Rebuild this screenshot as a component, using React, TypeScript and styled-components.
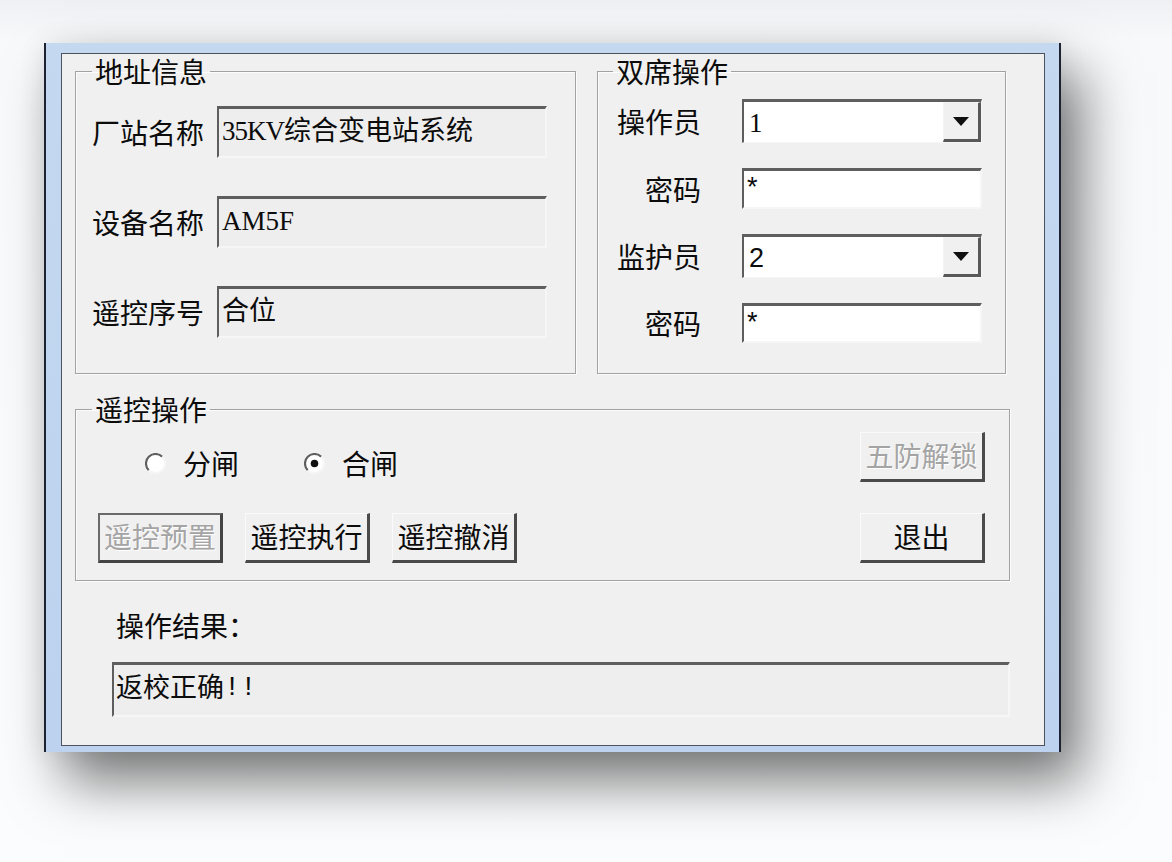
import React from "react";
import styled, { createGlobalStyle } from "styled-components";

const GlobalStyle = createGlobalStyle`
  html, body {
    margin: 0;
    padding: 0;
  }
  body {
    width: 1172px;
    height: 862px;
    overflow: hidden;
    background: linear-gradient(#eef0f3, #f8f9fb 40px, #fbfcfd);
    font-family: "Noto Sans CJK SC", "Noto Sans", sans-serif;
    color: #0c0c0c;
  }
`;

const Page = styled.div`
  padding: 43px 0 0 44px;
`;

const Window = styled.div`
  width: 1017px;
  height: 709px;
  box-sizing: border-box;
  padding: 10px 14px 6px 15px;
  border-left: 2px solid #1c2232;
  border-right: 2px solid #1c2232;
  background: linear-gradient(#c4d8f0, #bcd2ee);
  box-shadow: 20px 30px 52px rgba(0, 0, 0, 0.52), 0 0 26px rgba(0, 0, 0, 0.08);
`;

const Client = styled.div`
  height: 693px;
  box-sizing: border-box;
  padding: 3px 34px 0 13px;
  border: 1px solid #4c525e;
  background: #f0f0f0;
`;

const TopRow = styled.div`
  display: flex;
  gap: 21px;
  height: 317px;
`;

const Group = styled.fieldset<{ $width: number }>`
  width: ${(p) => p.$width}px;
  box-sizing: border-box;
  margin: 0;
  padding: 0;
  min-width: 0;
  border: 1px solid #a2a2a2;
  box-shadow: inset 1px 1px 0 #fcfcfc, 1px 1px 0 #fcfcfc;
`;

const Legend = styled.legend<{ $offset: number }>`
  margin-left: ${(p) => p.$offset}px;
  padding: 0 3px;
  font-size: 28px;
  line-height: 28px;
`;

const AddressGrid = styled.div`
  display: grid;
  grid-template-columns: 113px 330px;
  grid-auto-rows: 52px;
  column-gap: 12px;
  row-gap: 38px;
  align-items: center;
  padding: 21px 27px 0 16px;
`;

const DualGrid = styled.div`
  display: grid;
  grid-template-columns: 88px 240px;
  grid-template-rows: 44px 41px 44px 40px;
  column-gap: 41px;
  row-gap: 25px;
  align-items: center;
  padding: 14px 23px 0 15px;
`;

const Label = styled.div<{ $right?: boolean }>`
  font-size: 28px;
  line-height: 30px;
  white-space: nowrap;
  text-align: ${(p) => (p.$right ? "right" : "left")};
`;

const Field = styled.div<{ $white?: boolean; $serif?: boolean; $h?: number }>`
  height: ${(p) => p.$h ?? 52}px;
  box-sizing: border-box;
  display: flex;
  align-items: center;
  padding: 0 0 4px 3px;
  border-style: solid;
  border-width: 3px 2px 2px 2px;
  border-color: #5e5e5e #f6f6f6 #f6f6f6 #5e5e5e;
  background: ${(p) => (p.$white ? "#ffffff" : "#eeeeee")};
  font-family: ${(p) =>
    p.$serif
      ? `"Liberation Serif", "Noto Sans CJK SC", serif`
      : `"Liberation Sans", "Noto Sans CJK SC", sans-serif`};
  font-size: 27px;
  line-height: 30px;
  white-space: nowrap;
  overflow: hidden;
`;

const Condensed = styled.span`
  letter-spacing: -1px;
`;

const Mono = styled.span`
  font-family: "Liberation Mono", monospace;
`;

const Combo = styled.div`
  height: 44px;
  box-sizing: border-box;
  display: flex;
  border-style: solid;
  border-width: 3px 1px 1px 2px;
  border-color: #5e5e5e #f6f6f6 #f6f6f6 #5e5e5e;
  background: #ffffff;
`;

const ComboText = styled.div<{ $serif?: boolean }>`
  flex: 1;
  display: flex;
  align-items: center;
  padding: 2px 0 0 5px;
  font-family: ${(p) =>
    p.$serif ? `"Liberation Serif", serif` : `"Liberation Sans", sans-serif`};
  font-size: 27px;
`;

const DropButton = styled.div`
  width: 38px;
  box-sizing: border-box;
  display: flex;
  align-items: center;
  justify-content: center;
  border-style: solid;
  border-width: 1px 3px 3px 1px;
  border-color: #f4f4f4 #585858 #585858 #f4f4f4;
  background: #f0f0f0;
`;

const ControlGroup = styled(Group)`
  margin-top: 21px;
`;

const ControlBody = styled.div`
  display: flex;
  flex-direction: column;
  gap: 31px;
  padding: 9px 24px 17px 22px;
`;

const ControlRow = styled.div`
  display: flex;
  align-items: center;
  justify-content: space-between;
`;

const RadioSet = styled.div`
  display: flex;
  gap: 65px;
  margin: 12px 0 0 47px;
`;

const RadioItem = styled.label`
  display: flex;
  align-items: center;
  gap: 17px;
  font-size: 28px;
  line-height: 30px;
`;

const ButtonSet = styled.div`
  display: flex;
  gap: 22px;
`;

const Button = styled.button<{ $disabled?: boolean; $framed?: boolean }>`
  width: 125px;
  height: 50px;
  box-sizing: border-box;
  padding: 0 0 3px;
  font-family: "Noto Sans CJK SC", sans-serif;
  font-size: 28px;
  line-height: 30px;
  background: #f0f0f0;
  border-style: solid;
  border-width: ${(p) => (p.$framed ? "2px 3px 3px 2px" : "1px 3px 3px 1px")};
  border-color: ${(p) =>
    p.$framed
      ? "#6a6a6a #444444 #444444 #6a6a6a"
      : "#fafafa #4a4a4a #4a4a4a #fafafa"};
  color: ${(p) => (p.$disabled ? "#a4a4a4" : "#0c0c0c")};
  text-shadow: ${(p) => (p.$disabled ? "1px 1px 0 #ffffff" : "none")};
`;

const ResultLabel = styled.div`
  margin: 30px 0 0 41px;
  font-size: 28px;
  line-height: 28px;
`;

const ResultField = styled(Field)`
  margin: 23px 0 0 37px;
  width: 898px;
  height: 55px;
  padding-left: 2px;
`;

const Radio = ({ checked }: { checked?: boolean }) => (
  <svg width="21" height="21" viewBox="0 0 20 20">
    <circle cx="10" cy="10" r="9" fill="#ffffff" />
    <path d="M3.6 16.4 A9 9 0 0 1 16.4 3.6" stroke="#5e5e5e" strokeWidth="2" fill="none" />
    <path d="M16.4 3.6 A9 9 0 0 1 3.6 16.4" stroke="#f6f6f6" strokeWidth="2" fill="none" />
    {checked && <circle cx="10" cy="10" r="3.6" fill="#111111" />}
  </svg>
);

const Arrow = () => (
  <svg width="16" height="9" viewBox="0 0 16 9">
    <path d="M0 0 H16 L8 9 Z" fill="#101010" />
  </svg>
);

const App = () => {
  return (
    <>
      <GlobalStyle />
      <Page>
        <Window>
          <Client>
            <TopRow>
              <Group $width={501}>
                <Legend $offset={16}>地址信息</Legend>
                <AddressGrid>
                  <Label>厂站名称</Label>
                  <Field $serif>
                    <Condensed>35KV</Condensed>综合变电站系统
                  </Field>
                  <Label>设备名称</Label>
                  <Field $serif>AM5F</Field>
                  <Label>遥控序号</Label>
                  <Field $serif>合位</Field>
                </AddressGrid>
              </Group>

              <Group $width={409}>
                <Legend $offset={15}>双席操作</Legend>
                <DualGrid>
                  <Label $right>操作员</Label>
                  <Combo>
                    <ComboText $serif>1</ComboText>
                    <DropButton>
                      <Arrow />
                    </DropButton>
                  </Combo>
                  <Label $right>密码</Label>
                  <Field $white $h={41}>*</Field>
                  <Label $right>监护员</Label>
                  <Combo>
                    <ComboText>2</ComboText>
                    <DropButton>
                      <Arrow />
                    </DropButton>
                  </Combo>
                  <Label $right>密码</Label>
                  <Field $white $h={40}>*</Field>
                </DualGrid>
              </Group>
            </TopRow>

            <ControlGroup $width={935}>
              <Legend $offset={16}>遥控操作</Legend>
              <ControlBody>
                <ControlRow>
                  <RadioSet>
                    <RadioItem>
                      <Radio />
                      分闸
                    </RadioItem>
                    <RadioItem>
                      <Radio checked />
                      合闸
                    </RadioItem>
                  </RadioSet>
                  <Button $disabled>五防解锁</Button>
                </ControlRow>
                <ControlRow>
                  <ButtonSet>
                    <Button $disabled $framed>遥控预置</Button>
                    <Button>遥控执行</Button>
                    <Button>遥控撤消</Button>
                  </ButtonSet>
                  <Button>退出</Button>
                </ControlRow>
              </ControlBody>
            </ControlGroup>

            <ResultLabel>操作结果：</ResultLabel>
            <ResultField>
              返校正确<Mono>!!</Mono>
            </ResultField>
          </Client>
        </Window>
      </Page>
    </>
  );
};

export default App;
